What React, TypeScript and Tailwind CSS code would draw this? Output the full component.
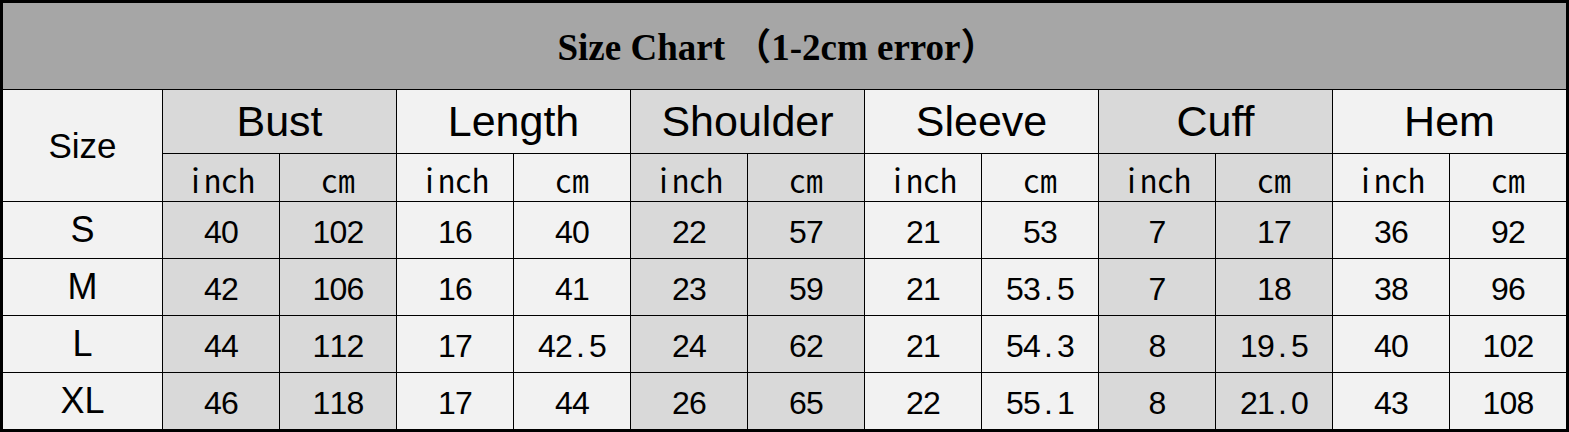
import React from "react";

const groups = ["Bust", "Length", "Shoulder", "Sleeve", "Cuff", "Hem"];
const rows: [string, string[]][] = [
  ["S", ["40", "102", "16", "40", "22", "57", "21", "53", "7", "17", "36", "92"]],
  ["M", ["42", "106", "16", "41", "23", "59", "21", "53.5", "7", "18", "38", "96"]],
  ["L", ["44", "112", "17", "42.5", "24", "62", "21", "54.3", "8", "19.5", "40", "102"]],
  ["XL", ["46", "118", "17", "44", "26", "65", "22", "55.1", "8", "21.0", "43", "108"]],
];

const shade = (g: number) => (g % 2 === 0 ? "bg-[#d9d9d9]" : "bg-[#f2f2f2]");
const mono =
  "font-['Noto_Sans_CJK_JP',sans-serif] font-[350] [font-feature-settings:'hwid'] leading-none text-black";
const prop = "font-['Liberation_Sans',Arial,sans-serif] leading-none text-black";

function Num({ v }: { v: string }) {
  return (
    <span className={`${prop} text-[32px] flex`}>
      {v.split("").map((c, i) => (
        <span key={i} className="inline-block w-[17px] text-center">
          {c}
        </span>
      ))}
    </span>
  );
}

export default function App() {
  return (
    <div className="w-[1569px] h-[432px] bg-black border-[3px] border-black box-border">
      <div className="grid grid-cols-[159px_repeat(12,116px)] grid-rows-[86px_63px_47px_repeat(4,56px)] gap-px">
        <div className="col-span-13 bg-[#a6a6a6] flex items-center justify-center">
          <span className="font-['Liberation_Serif','Noto_Sans_CJK_SC',serif] font-bold text-[37px] leading-none text-black pt-[2px] pr-[14px]">
            Size Chart （1-2cm error）
          </span>
        </div>
        <div className="row-span-2 bg-[#f2f2f2] flex items-center justify-center">
          <span className={`${prop} text-[35px]`}>Size</span>
        </div>
        {groups.map((g, i) => (
          <div key={g} className={`col-span-2 ${shade(i)} flex items-center justify-center`}>
            <span className={`${prop} text-[43px]`}>{g}</span>
          </div>
        ))}
        {groups.map((g, i) => (
          <React.Fragment key={g + "u"}>
            <div className={`${shade(i)} flex items-center justify-center pt-[3px]`}>
              <span className={`${mono} text-[34px]`}>inch</span>
            </div>
            <div className={`${shade(i)} flex items-center justify-center pt-[3px]`}>
              <span className={`${mono} text-[34px]`}>cm</span>
            </div>
          </React.Fragment>
        ))}
        {rows.map(([size, vals]) => (
          <React.Fragment key={size}>
            <div className="bg-[#f2f2f2] flex items-center justify-center">
              <span className={`${prop} text-[36px]`}>{size}</span>
            </div>
            {vals.map((v, j) => (
              <div key={j} className={`${shade(Math.floor(j / 2))} flex items-center justify-center pt-[4px]`}>
                <Num v={v} />
              </div>
            ))}
          </React.Fragment>
        ))}
      </div>
    </div>
  );
}
